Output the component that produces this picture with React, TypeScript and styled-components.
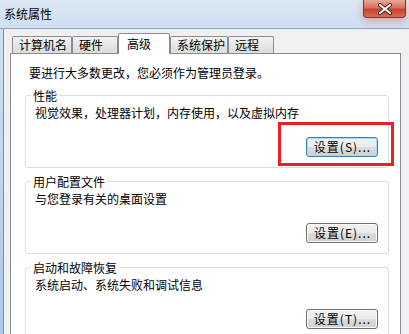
import styled, { createGlobalStyle } from "styled-components";

const GlobalStyle = createGlobalStyle`
  html, body {
    margin: 0;
    padding: 0;
  }
  body {
    width: 409px;
    height: 334px;
    overflow: hidden;
    background: #f0f0f0;
    font-family: "Noto Sans CJK SC", "Liberation Sans", sans-serif;
    font-size: 12px;
    color: #000;
  }
`;

const Window = styled.div`
  display: flex;
  flex-direction: column;
  width: 409px;
  height: 334px;
  overflow: hidden;
`;

const TitleBar = styled.div`
  display: flex;
  justify-content: space-between;
  align-items: flex-start;
  height: 28px;
  flex-shrink: 0;
  border-bottom: 1px solid #8ea3bc;
  background: linear-gradient(#dbe7f4, #d3e3f4 60%, #cddff2);
`;

const Title = styled.div`
  align-self: center;
  padding: 0 0 2px 4px;
  line-height: 17px;
`;

const CloseButton = styled.div`
  display: flex;
  align-items: center;
  justify-content: center;
  width: 43px;
  height: 18px;
  margin-right: 3px;
  box-sizing: border-box;
  border: 1px solid #83332a;
  border-top: none;
  border-radius: 0 0 4px 4px;
  background: linear-gradient(#e9a99b, #d8705f 45%, #c7432f 55%, #d86a55);
  box-shadow: 0 3px 8px rgba(214, 90, 70, 0.45);
`;

const Frame = styled.div`
  flex: 1;
  display: flex;
  padding-left: 3px;
  background: linear-gradient(#cfe0f3, #a9c8eb);
`;

const Client = styled.div`
  flex: 1;
  display: flex;
  flex-direction: column;
  border-left: 1px solid #7d8ea3;
  padding: 4px 8px 0 6px;
  background: #f0f0f0;
`;

const TabStrip = styled.div`
  display: flex;
  align-items: flex-start;
  margin: 0 0 -1px 2px;
  position: relative;
  z-index: 1;
`;

const Tab = styled.div<{ $w: number; $active?: boolean }>`
  box-sizing: border-box;
  width: ${(p) => p.$w}px;
  height: ${(p) => (p.$active ? 21 : 17)}px;
  margin-top: ${(p) => (p.$active ? 0 : 3)}px;
  padding: ${(p) => (p.$active ? "2px 0 0 8px" : "0 0 0 6px")};
  border: 1px solid #898c95;
  border-bottom: none;
  border-radius: 2px 2px 0 0;
  line-height: 16px;
  white-space: nowrap;
  background: ${(p) =>
    p.$active ? "#fff" : "linear-gradient(#f4f4f4, #e6e6e6 50%, #dcdcdc)"};
`;

const Panel = styled.div`
  flex: 1;
  display: flex;
  flex-direction: column;
  gap: 5px;
  background: #fff;
  border: 1px solid #898c95;
  padding: 10px 11px 0 14px;
`;

const Intro = styled.div`
  margin: 0 0 1px 4px;
  line-height: 17px;
`;

const Group = styled.fieldset`
  margin: 0;
  min-width: 0;
  flex-shrink: 0;
  border: 1px solid #d5dfe5;
  border-radius: 3px;
  padding: 0 10px 10px 5px;
`;

const Caption = styled.legend`
  padding: 0 2px;
  line-height: 17px;
`;

const Description = styled.div`
  margin-left: 4px;
  line-height: 17px;
`;

const ButtonRow = styled.div`
  display: flex;
  justify-content: flex-end;
  margin-top: 16px;
`;

const Marked = styled.span`
  position: relative;
  display: inline-flex;

  &::after {
    content: "";
    position: absolute;
    inset: -15px -16px -9px -28px;
    border: 3px solid #ec1f27;
    pointer-events: none;
  }
`;

const SettingsButton = styled.button<{ $default?: boolean }>`
  box-sizing: border-box;
  width: 72px;
  height: 20px;
  padding: 0 0 0 1px;
  font-family: inherit;
  font-size: 12px;
  line-height: 16px;
  letter-spacing: 1px;
  color: #000;
  border: 1px solid ${(p) => (p.$default ? "#3c7fb1" : "#707070")};
  border-radius: 3px;
  background: linear-gradient(#f2f2f2, #ebebeb 50%, #dddddd 50%, #cfcfcf);
  box-shadow: inset 0 0 0 1px ${(p) => (p.$default ? "#9fdcf7" : "#fbfbfb")};
`;

const groups = [
  {
    title: "性能",
    text: "视觉效果，处理器计划，内存使用，以及虚拟内存",
    key: "S",
    marked: true,
  },
  { title: "用户配置文件", text: "与您登录有关的桌面设置", key: "E" },
  { title: "启动和故障恢复", text: "系统启动、系统失败和调试信息", key: "T" },
];

const tabs = [
  { label: "计算机名", w: 60 },
  { label: "硬件", w: 46 },
  { label: "高级", w: 52, active: true },
  { label: "系统保护", w: 58 },
  { label: "远程", w: 46 },
];

const App = () => {
  return (
    <>
      <GlobalStyle />
      <Window>
        <TitleBar>
          <Title>系统属性</Title>
          <CloseButton>
            <svg width="16" height="12" viewBox="0 0 16 12">
              <path
                d="M3 2 L13 10 M13 2 L3 10"
                stroke="#4a1a14"
                strokeWidth="4"
                strokeLinecap="round"
              />
              <path
                d="M3 2 L13 10 M13 2 L3 10"
                stroke="#fff"
                strokeWidth="2.2"
                strokeLinecap="round"
              />
            </svg>
          </CloseButton>
        </TitleBar>
        <Frame>
          <Client>
            <TabStrip>
              {tabs.map((t) => (
                <Tab key={t.label} $w={t.w} $active={t.active}>
                  {t.label}
                </Tab>
              ))}
            </TabStrip>
            <Panel>
              <Intro>要进行大多数更改，您必须作为管理员登录。</Intro>
              {groups.map((g) => {
                const button = (
                  <SettingsButton $default={g.marked}>
                    设置({g.key})...
                  </SettingsButton>
                );
                return (
                  <Group key={g.title}>
                    <Caption>{g.title}</Caption>
                    <Description>{g.text}</Description>
                    <ButtonRow>
                      {g.marked ? <Marked>{button}</Marked> : button}
                    </ButtonRow>
                  </Group>
                );
              })}
            </Panel>
          </Client>
        </Frame>
      </Window>
    </>
  );
};

export default App;
